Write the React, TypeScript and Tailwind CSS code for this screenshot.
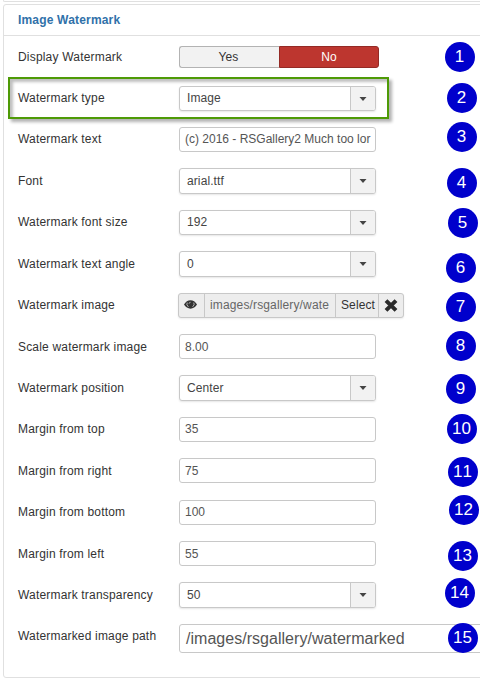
import type { ReactNode } from "react";

const boxBase = "w-[197px] rounded-[3px] border border-[#c8c8c8] bg-white";

function Caret() {
  return (
    <svg width="8" height="4" viewBox="0 0 8 4" className="block">
      <path d="M0.5 0h7L4 4z" fill="#444" />
    </svg>
  );
}

function Select({ value, tall }: { value: string; tall?: boolean }) {
  return (
    <div className={`${boxBase} ${tall ? "h-[26px] leading-[25px]" : "h-[25px] leading-[23px]"} flex overflow-hidden shadow-[0_1px_2px_rgba(0,0,0,0.1)]`}>
      <span className="flex-1 pl-[7px] tracking-[0.1px] text-[#444]">{value}</span>
      <span className="flex w-[25px] items-center justify-center border-l border-[#c8c8c8] bg-[#f2f2f2]">
        <Caret />
      </span>
    </div>
  );
}

function TextField({ value, low }: { value: string; low?: boolean }) {
  return (
    <div className={`${boxBase} h-[25px] pl-[5px] ${low ? "leading-[25px]" : "leading-[23px]"}`}>
      <div className="whitespace-nowrap text-[#555]">{value}</div>
    </div>
  );
}

function MediaPicker() {
  return (
    <div className="-ml-px flex h-[25px] w-[226px] overflow-hidden rounded-[3px] border border-[#c8c8c8] bg-[#ededed] leading-[23px] shadow-[0_1px_2px_rgba(0,0,0,0.08)]">
      <span className="flex w-[26px] justify-center border-r border-[#c8c8c8] pt-[6px] pr-[3px]">
        <svg width="13" height="9" viewBox="0 0 13 9">
          <path d="M0 4.5C3-1.2 10-1.2 13 4.5 10 10 3 10 0 4.5z" fill="#333" />
          <path d="M3.2 2.6Q2 4.8 4.4 6.8M9.8 2.6Q11 4.8 8.6 6.8" stroke="#ededed" strokeWidth="0.7" fill="none" />
          <path d="M5 3.6Q5.2 2.5 6.5 2.3" stroke="#ededed" strokeWidth="0.7" fill="none" />
        </svg>
      </span>
      <span className="w-[131px] border-r border-[#c8c8c8] pl-[5px] tracking-[0.14px] whitespace-nowrap text-[#666]">
        images/rsgallery/wate
      </span>
      <span className="w-[43px] border-r border-[#c8c8c8] pl-[5px] tracking-[0.1px] text-[#333]">Select</span>
      <span className="flex flex-1 justify-center pt-[5px]">
        <svg width="14" height="13" viewBox="0 0 14 13">
          <path d="M2 1.6l10 9.8M12 1.6l-10 9.8" stroke="#2b2b2b" strokeWidth="4" />
        </svg>
      </span>
    </div>
  );
}

const rows: { label: string; control: ReactNode; low?: boolean }[] = [
  { label: "Watermark type", control: <Select value="Image" /> },
  { label: "Watermark text", control: <TextField value="(c) 2016 - RSGallery2 Much too lor" /> },
  { label: "Font", control: <Select value="arial.ttf" tall />, low: true },
  { label: "Watermark font size", control: <Select value="192" /> },
  { label: "Watermark text angle", control: <Select value="0" tall />, low: true },
  { label: "Watermark image", control: <MediaPicker /> },
  { label: "Scale watermark image", control: <TextField value="8.00" low />, low: true },
  { label: "Watermark position", control: <Select value="Center" tall />, low: true },
  { label: "Margin from top", control: <TextField value="35" /> },
  { label: "Margin from right", control: <TextField value="75" low />, low: true },
  { label: "Margin from bottom", control: <TextField value="100" /> },
  { label: "Margin from left", control: <TextField value="55" low />, low: true },
  { label: "Watermark transparency", control: <Select value="50" tall />, low: true },
  {
    label: "Watermarked image path",
    control: (
      <div className="h-[29px] w-[320px] rounded-[3px] border border-[#c8c8c8] bg-white pl-[6px] text-[16px] leading-[27px] tracking-[0.03px] text-[#555]">
        /images/rsgallery/watermarked
      </div>
    ),
  },
];

const pins = [
  "left-[445px] top-[41.5px]",
  "left-[447px] top-[82.5px]",
  "left-[447px] top-[121.5px]",
  "left-[447px] top-[167.5px]",
  "left-[448px] top-[207.5px]",
  "left-[446px] top-[252.5px]",
  "left-[446px] top-[291.5px]",
  "left-[446px] top-[330.5px]",
  "left-[446px] top-[373.5px]",
  "left-[447px] top-[413.5px]",
  "left-[448px] top-[456.5px]",
  "left-[449px] top-[494.5px]",
  "left-[448px] top-[540.5px]",
  "left-[445px] top-[577.5px]",
  "left-[448px] top-[622.5px]",
];

export default function App() {
  return (
    <div className="relative h-[689px] w-[480px] overflow-hidden bg-white font-['Liberation_Sans',Arial,sans-serif] text-[12px] text-[#333]">
      <div className="ml-[3px] h-[2px] w-[500px] rounded-bl-[3px] border-b border-l border-[#e0e0e0]" />
      <section className="mt-[2px] ml-[3px] h-[674px] w-[500px] rounded-[3px] border border-[#e0e0e0]">
        <h2 className="h-[31px] border-b border-[#e0e0e0] pl-[14px] text-[12px] leading-[30px] font-bold tracking-[0.18px] text-[#3071a9]">
          Image Watermark
        </h2>
        <div className="flex h-[50px] pt-[10px] pl-[14px]">
          <span className="w-[161px] leading-[22px] tracking-[0.19px]">Display Watermark</span>
          <div className="flex h-[22px] w-[200px] text-center leading-[20px] tracking-[0.1px]">
            <span className="w-[100px] rounded-l-[3px] border border-r-0 border-[#b3b3b3] bg-[#f2f2f2] pr-[2px]">Yes</span>
            <span className="w-[100px] rounded-r-[3px] border border-[#942a25] bg-[#bd362f] text-white">No</span>
          </div>
        </div>
        <div className="grid grid-rows-[41px_41px_42px_41px_42px_41px_41px_42px_41px_42px_41px_41px_42px_41px] pl-[14px]">
          {rows.map((row) => (
            <div key={row.label} className="flex items-start">
              <span className={`w-[161px] shrink-0 tracking-[0.18px] whitespace-nowrap ${row.low ? "leading-[26px]" : "leading-[24px]"}`}>
                {row.label}
              </span>
              <div className="shrink-0">{row.control}</div>
            </div>
          ))}
        </div>
      </section>
      <div className="absolute top-[77px] left-[8px] h-[42px] w-[381px] border-2 border-[#4e9a06] shadow-[3px_3px_3px_rgba(0,0,0,0.3),inset_3px_3px_3px_rgba(0,0,0,0.25)]" />
      {pins.map((position, i) => (
        <span
          key={position}
          className={`absolute flex size-[30px] items-center justify-center rounded-full bg-[#0000cc] pr-px pb-px text-[17px] leading-none text-white [font-kerning:none] ${position}`}
        >
          {i + 1}
        </span>
      ))}
    </div>
  );
}
